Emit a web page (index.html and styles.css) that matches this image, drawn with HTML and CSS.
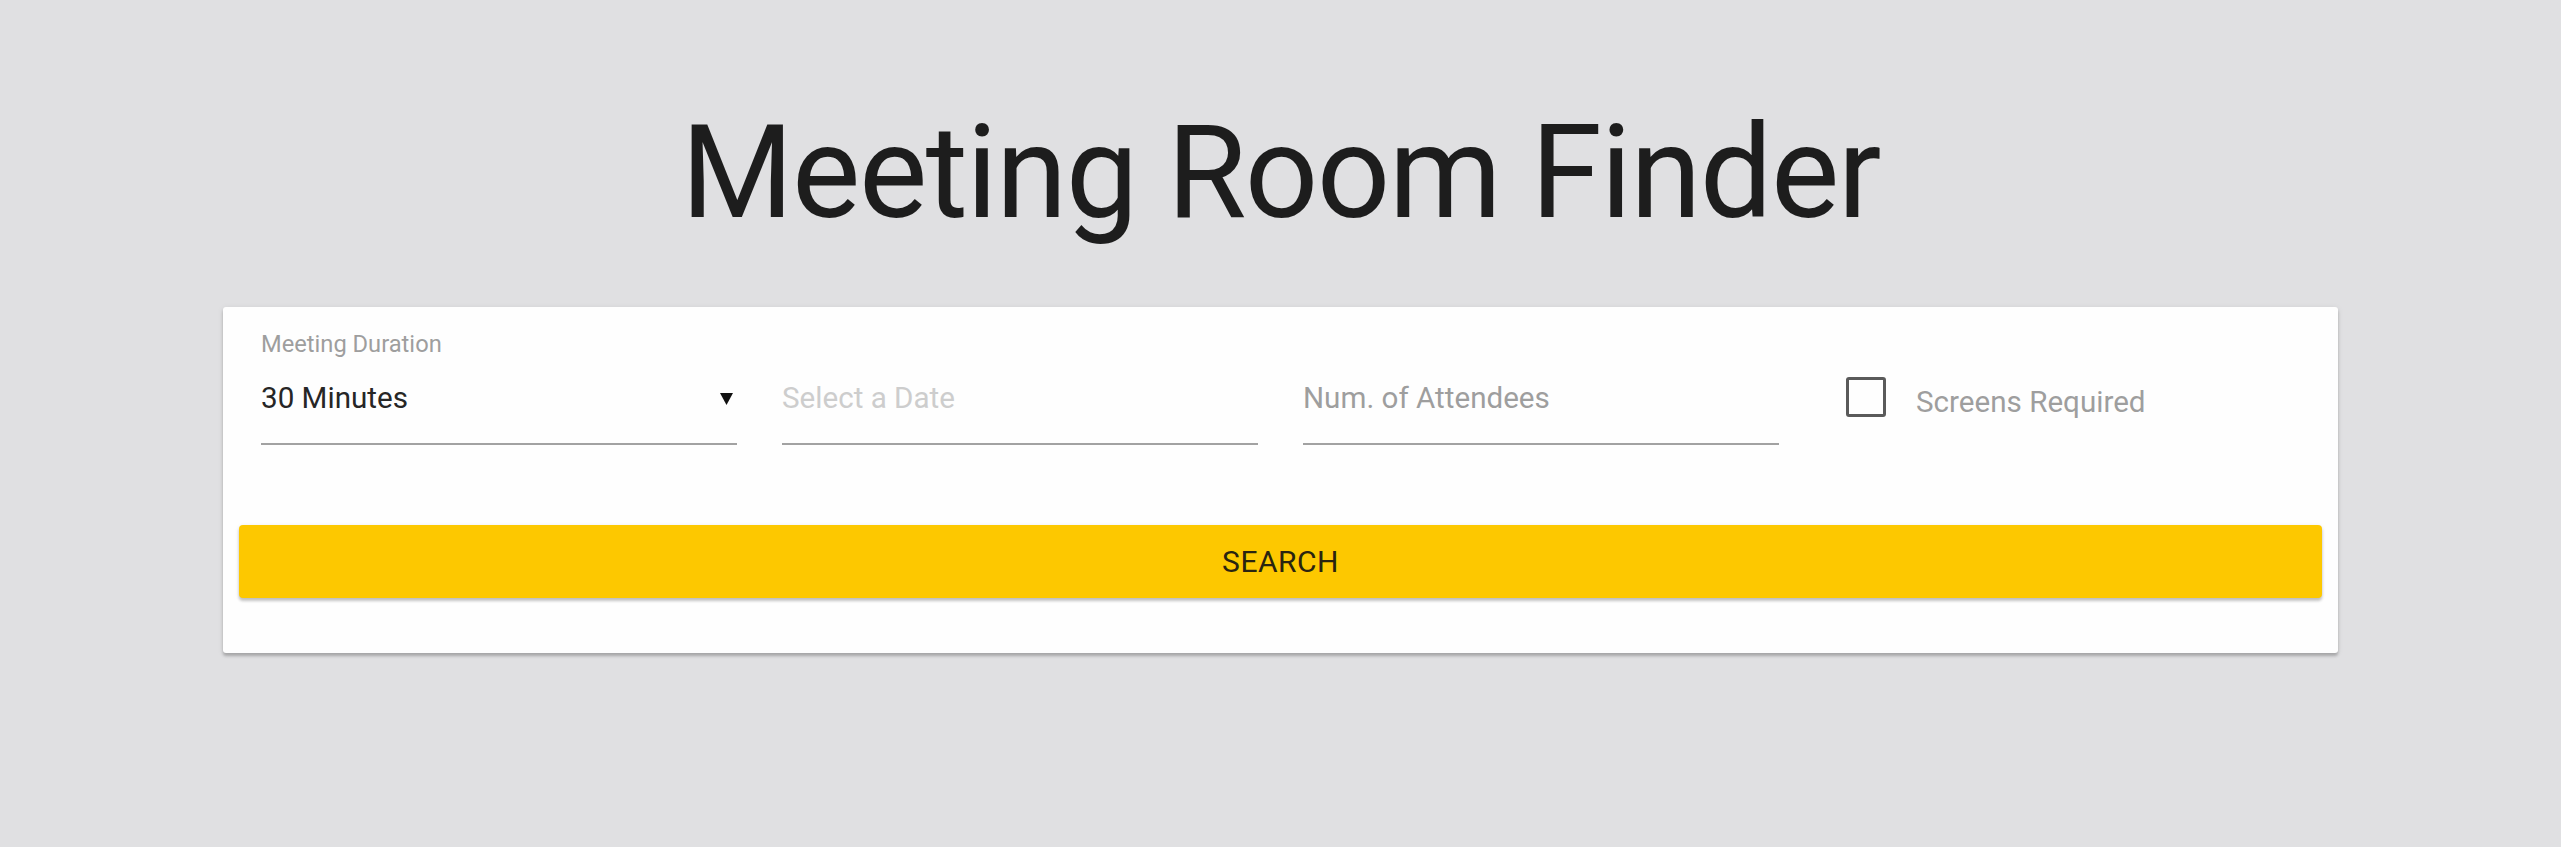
FILE: index.html
```html
<!DOCTYPE html>
<html lang="en">
<head>
<meta charset="utf-8">
<title>Meeting Room Finder</title>
<link rel="stylesheet" href="styles.css">
</head>
<body>
<main class="page">
  <h1 class="title">Meeting Room Finder</h1>
  <section class="card">
    <div class="fields">
      <div class="field">
        <div class="label">Meeting Duration</div>
        <div class="control">
          <span class="value">30 Minutes</span>
          <svg class="caret" width="13" height="13" viewBox="0 0 13 13" aria-hidden="true"><polygon points="0,1 13,1 6.5,13" fill="#111"/></svg>
        </div>
      </div>
      <div class="field">
        <div class="label"></div>
        <div class="control">
          <span class="placeholder">Select a Date</span>
        </div>
      </div>
      <div class="field">
        <div class="label"></div>
        <div class="control">
          <span class="hint">Num. of Attendees</span>
        </div>
      </div>
      <div class="field">
        <div class="label"></div>
        <div class="check">
          <span class="box"></span>
          <span class="check-text">Screens Required</span>
        </div>
      </div>
    </div>
    <button class="search" type="button">SEARCH</button>
  </section>
</main>
</body>
</html>
```
FILE: styles.css
```css
html, body {
  margin: 0;
  padding: 0;
}
body {
  background: #e0e0e2;
  font-family: Roboto, "Liberation Sans", sans-serif;
  min-height: 847px;
}
.page {
  padding-top: 108px;
}
.title {
  margin: 0 0 70px 0;
  text-align: center;
  font-size: 129px;
  line-height: 129px;
  font-weight: 400;
  color: #1d1d1d;
  letter-spacing: -1.6px;
}
.card {
  width: 2115px;
  margin: 0 auto;
  box-sizing: border-box;
  background: #fefefe;
  border-radius: 3px;
  box-shadow: 0 3px 3px rgba(0,0,0,0.22), 0 1px 6px rgba(0,0,0,0.08);
  padding: 26px 16px 55px 16px;
}
.fields {
  display: grid;
  grid-template-columns: repeat(4, 1fr);
  column-gap: 45px;
  padding: 0 22px;
}
.label {
  height: 43px;
  font-size: 23.7px;
  line-height: 23.7px;
  color: #9e9e9e;
}
.control {
  display: flex;
  align-items: flex-start;
  justify-content: space-between;
  height: 67px;
  border-bottom: 2px solid #a2a2a2;
  font-size: 29.6px;
  line-height: 44px;
}
.value {
  color: #262626;
}
.placeholder {
  color: #cdcdcd;
}
.hint {
  color: #9e9e9e;
}
.caret {
  margin-top: 16px;
  margin-right: 4px;
}
.check {
  display: flex;
  align-items: flex-start;
  padding-top: 1px;
  padding-left: 22px;
}
.box {
  width: 40px;
  height: 40px;
  box-sizing: border-box;
  border: 3px solid #5a5a5a;
  border-radius: 3px;
  flex: none;
}
.check-text {
  margin-left: 30px;
  margin-top: 3px;
  font-size: 29.6px;
  line-height: 44px;
  color: #9e9e9e;
}
.search {
  display: block;
  width: 100%;
  height: 73px;
  margin-top: 80px;
  border: none;
  border-radius: 4px;
  background: #fdc800;
  color: #2a2410;
  font-family: Roboto, "Liberation Sans", sans-serif;
  font-size: 30px;
  letter-spacing: 0.5px;
  line-height: 73px;
  padding: 0;
  box-shadow: 0 3px 3px rgba(0,0,0,0.2), 0 1px 4px rgba(0,0,0,0.1);
}
```
